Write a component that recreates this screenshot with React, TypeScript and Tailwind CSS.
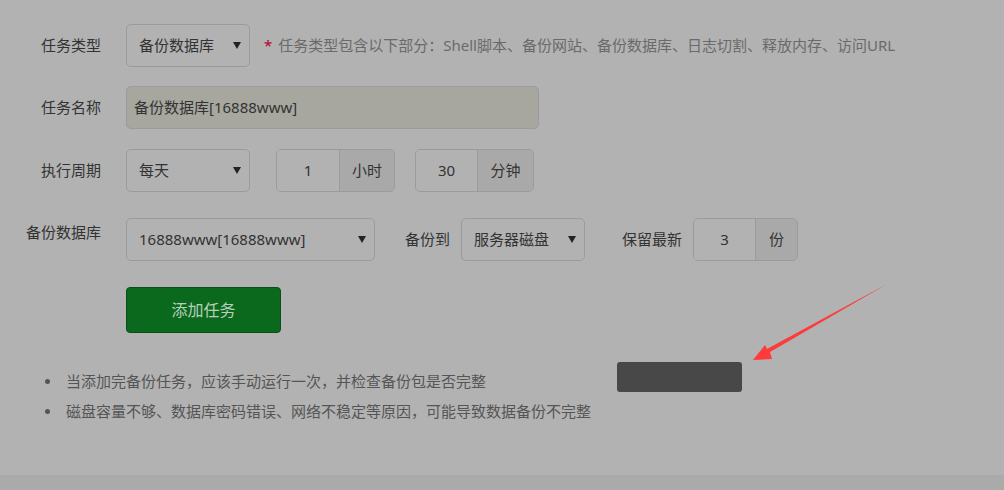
import React from "react";

const font = { fontFamily: '"Noto Sans", "Noto Sans CJK SC", sans-serif' };

function Caret() {
  return (
    <svg width="8" height="7" viewBox="0 0 8 7" className="shrink-0">
      <polygon points="0,0 8,0 4,7" fill="#222" />
    </svg>
  );
}

function Select({ w, text }: { w: string; text: string }) {
  return (
    <div className={`${w} h-[43px] rounded-[5px] border border-[#9b9b9b] bg-[#b2b2b2] flex items-center justify-between pl-[12px] pr-[8px] text-[15px] text-[#333]`}>
      <span>{text}</span>
      <Caret />
    </div>
  );
}

function InputGroup({ value, unit, iw, aw }: { value: string; unit: string; iw: string; aw: string }) {
  return (
    <div className="flex h-[43px] rounded-[5px] border border-[#9b9b9b] overflow-hidden text-[15px] text-[#333]">
      <div className={`${iw} flex items-center justify-center bg-[#b2b2b2]`}>{value}</div>
      <div className={`${aw} flex items-center justify-center bg-[#a9a9a9] border-l border-[#9b9b9b]`}>{unit}</div>
    </div>
  );
}

function Bullet({ children }: { children: React.ReactNode }) {
  return (
    <li className="flex items-center h-[30px]">
      <span className="w-[5px] h-[5px] rounded-full bg-[#555] ml-[45px] mr-[16px]" />
      <span>{children}</span>
    </li>
  );
}

export default function App() {
  return (
    <div className="relative w-[1004px] h-[490px] bg-[#b2b2b2] overflow-hidden flex flex-col" style={font}>
      <div className="flex-1 pt-[24px]">
        {/* row 1 */}
        <div className="flex items-center h-[43px]">
          <div className="w-[101px] text-right text-[15px] text-[#333]">任务类型</div>
          <div className="ml-[25px]">
            <Select w="w-[124px]" text="备份数据库" />
          </div>
          <div className="ml-[14px] text-[15px] text-[#6a6a6a]">
            <span className="text-[#b2002a] mr-[6px]">*</span>任务类型包含以下部分：Shell脚本、备份网站、备份数据库、日志切割、释放内存、访问URL
          </div>
        </div>
        {/* row 2 */}
        <div className="flex items-center h-[43px] mt-[19px]">
          <div className="w-[101px] text-right text-[15px] text-[#333]">任务名称</div>
          <div className="ml-[25px] w-[413px] h-[43px] rounded-[5px] border border-[#9b9b9b] bg-[#a7a79f] flex items-center pl-[7px] text-[15px] text-[#333]">
            备份数据库[16888www]
          </div>
        </div>
        {/* row 3 */}
        <div className="flex items-center h-[43px] mt-[20px]">
          <div className="w-[101px] text-right text-[15px] text-[#333]">执行周期</div>
          <div className="ml-[25px]">
            <Select w="w-[124px]" text="每天" />
          </div>
          <div className="ml-[26px]">
            <InputGroup value="1" unit="小时" iw="w-[62px]" aw="w-[55px]" />
          </div>
          <div className="ml-[20px]">
            <InputGroup value="30" unit="分钟" iw="w-[61px]" aw="w-[56px]" />
          </div>
        </div>
        {/* row 4 */}
        <div className="flex items-center h-[43px] mt-[26px]">
          <div className="w-[101px] text-right text-[15px] leading-[20px] text-[#333] self-start mt-[4px]">备份数据库</div>
          <div className="ml-[25px]">
            <Select w="w-[249px]" text="16888www[16888www]" />
          </div>
          <div className="ml-[30px] text-[15px] text-[#333]">备份到</div>
          <div className="ml-[11px]">
            <Select w="w-[124px]" text="服务器磁盘" />
          </div>
          <div className="ml-[37px] text-[15px] text-[#333]">保留最新</div>
          <div className="ml-[11px]">
            <InputGroup value="3" unit="份" iw="w-[61px]" aw="w-[42px]" />
          </div>
        </div>
        {/* button */}
        <div className="mt-[26px] ml-[126px]">
          <div className="w-[155px] h-[46px] rounded-[4px] bg-[#0b691d] border border-[#0a4d16] flex items-center justify-center text-[16px] text-[#b9cfbb]">
            添加任务
          </div>
        </div>
        {/* notes */}
        <ul className="mt-[33px] text-[15px] text-[#555]">
          <Bullet>当添加完备份任务，应该手动运行一次，并检查备份包是否完整</Bullet>
          <Bullet>磁盘容量不够、数据库密码错误、网络不稳定等原因，可能导致数据备份不完整</Bullet>
        </ul>
      </div>
      <div className="h-[15px] bg-[#aaaaaa]" />

      {/* toast */}
      <div className="absolute left-[617px] top-[362px] w-[125px] h-[30px] rounded-[3px] bg-[#484848]" />
      {/* arrow */}
      <svg className="absolute left-0 top-0" width="1004" height="490" viewBox="0 0 1004 490">
        <polygon points="887,284 770,352 772,359 753,360 765,345 767,349" fill="#ff3a3a" />
      </svg>
    </div>
  );
}
